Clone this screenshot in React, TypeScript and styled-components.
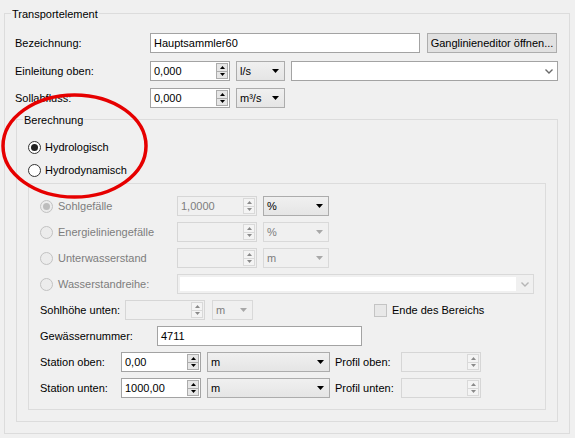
import React from "react";
import styled, { createGlobalStyle } from "styled-components";

const GlobalStyle = createGlobalStyle`
  html, body { margin: 0; padding: 0; background: #f0f0f0; }
  body {
    font-family: "Liberation Sans", Arial, sans-serif;
    font-size: 11px;
    color: #000;
  }
  * { box-sizing: border-box; }
`;

const DISABLED_TEXT = "#7d7d7d";

const Page = styled.div`
  position: relative;
  width: 575px;
  height: 438px;
  padding: 13px 0 0 4px;
  background: #f0f0f0;
  overflow: hidden;
`;

const GroupBox = styled.div<{ $w: number; $h: number; $ml?: number; $mt?: number }>`
  display: flex;
  flex-direction: column;
  width: ${(p) => p.$w}px;
  height: ${(p) => p.$h}px;
  margin: ${(p) => p.$mt ?? 0}px 0 0 ${(p) => p.$ml ?? 0}px;
  border: 1px solid #dcdcdc;
  flex: none;
`;

const GroupTitle = styled.div`
  align-self: flex-start;
  margin: -6px 0 0 6px;
  padding: 0 1px;
  line-height: 13px;
  height: 13px;
  background: #f0f0f0;
  white-space: nowrap;
`;

const Row = styled.div<{ $mt: number; $ml?: number; $h?: number }>`
  display: flex;
  align-items: center;
  height: ${(p) => p.$h ?? 20}px;
  margin: ${(p) => p.$mt}px 0 0 ${(p) => p.$ml ?? 0}px;
  flex: none;
`;

const Label = styled.div<{ $w?: number; $disabled?: boolean; $ml?: number }>`
  width: ${(p) => (p.$w ? `${p.$w}px` : "auto")};
  margin-left: ${(p) => p.$ml ?? 0}px;
  flex: none;
  white-space: nowrap;
  line-height: 13px;
  color: ${(p) => (p.$disabled ? DISABLED_TEXT : "#000")};
`;

const TextBox = styled.div<{ $w: number }>`
  width: ${(p) => p.$w}px;
  height: 20px;
  flex: none;
  border: 1px solid #a3a3a3;
  background: #fff;
  padding-left: 3px;
  line-height: 18px;
  white-space: nowrap;
`;

const PushButton = styled.div<{ $w: number; $ml?: number }>`
  width: ${(p) => p.$w}px;
  height: 20px;
  margin-left: ${(p) => p.$ml ?? 0}px;
  flex: none;
  border: 1px solid #adadad;
  background: #e1e1e1;
  display: flex;
  align-items: center;
  justify-content: center;
  white-space: nowrap;
`;

/* ---------- Spin box ---------- */

const SpinFrame = styled.div<{ $w: number; $ml?: number; $disabled?: boolean }>`
  display: flex;
  align-items: stretch;
  width: ${(p) => p.$w}px;
  height: 20px;
  margin-left: ${(p) => p.$ml ?? 0}px;
  flex: none;
  padding: 1px 1px 1px 0;
  border: 1px solid ${(p) => (p.$disabled ? "#d6d6d6" : "#a3a3a3")};
  background: ${(p) => (p.$disabled ? "#f0f0f0" : "#fff")};
`;

const SpinValue = styled.div<{ $disabled?: boolean }>`
  flex: 1;
  padding-left: 3px;
  line-height: 16px;
  white-space: nowrap;
  color: ${(p) => (p.$disabled ? DISABLED_TEXT : "#000")};
`;

const SpinButtons = styled.div<{ $disabled?: boolean }>`
  width: 12px;
  display: flex;
  flex-direction: column;
  border: 1px solid ${(p) => (p.$disabled ? "#d9d9d9" : "#acacac")};
  background: ${(p) => (p.$disabled ? "#f4f4f4" : "#e6e6e6")};
`;

const SpinHalf = styled.div<{ $top?: boolean; $disabled?: boolean }>`
  flex: 1;
  display: flex;
  align-items: center;
  justify-content: center;
  border-bottom: ${(p) => (p.$top ? `1px solid ${p.$disabled ? "#d9d9d9" : "#acacac"}` : "none")};
`;

const Tri: React.FC<{ up?: boolean; color: string; w?: number; h?: number }> = ({ up, color, w = 5, h = 3 }) => (
  <svg width={w} height={h} viewBox={`0 0 ${w} ${h}`} style={{ display: "block" }}>
    {up ? (
      <polygon points={`0,${h} ${w / 2},0 ${w},${h}`} fill={color} />
    ) : (
      <polygon points={`0,0 ${w},0 ${w / 2},${h}`} fill={color} />
    )}
  </svg>
);

const SpinBox: React.FC<{ w?: number; ml?: number; value?: string; disabled?: boolean }> = ({
  w = 80,
  ml,
  value = "",
  disabled,
}) => {
  const c = disabled ? "#8a8a8a" : "#000";
  return (
    <SpinFrame $w={w} $ml={ml} $disabled={disabled}>
      <SpinValue $disabled={disabled}>{value}</SpinValue>
      <SpinButtons $disabled={disabled}>
        <SpinHalf $top $disabled={disabled}>
          <Tri up color={c} />
        </SpinHalf>
        <SpinHalf $disabled={disabled}>
          <Tri color={c} />
        </SpinHalf>
      </SpinButtons>
    </SpinFrame>
  );
};

/* ---------- Combo boxes ---------- */

const DropList = styled.div<{ $w: number; $ml?: number; $disabled?: boolean }>`
  display: flex;
  align-items: center;
  justify-content: space-between;
  width: ${(p) => p.$w}px;
  height: 20px;
  margin-left: ${(p) => p.$ml ?? 0}px;
  flex: none;
  padding: 0 5px 0 3px;
  border: 1px solid ${(p) => (p.$disabled ? "#d9d9d9" : "#acacac")};
  background: ${(p) => (p.$disabled ? "#f0f0f0" : "linear-gradient(#f0f0f0, #e5e5e5)")};
  color: ${(p) => (p.$disabled ? DISABLED_TEXT : "#000")};
  white-space: nowrap;
`;

const ComboBox: React.FC<{ w: number; ml?: number; value: string; disabled?: boolean }> = ({
  w,
  ml,
  value,
  disabled,
}) => (
  <DropList $w={w} $ml={ml} $disabled={disabled}>
    <span>{value}</span>
    <Tri color={disabled ? "#a8a8a8" : "#000"} w={7} h={4} />
  </DropList>
);

const EditFrame = styled.div<{ $w: number; $ml?: number; $disabled?: boolean }>`
  display: flex;
  align-items: stretch;
  width: ${(p) => p.$w}px;
  height: 20px;
  margin-left: ${(p) => p.$ml ?? 0}px;
  flex: none;
  border: 1px solid ${(p) => (p.$disabled ? "#d9d9d9" : "#a3a3a3")};
  background: ${(p) => (p.$disabled ? "#f0f0f0" : "#fff")};
  padding: ${(p) => (p.$disabled ? "2px 0 2px 2px" : "0")};
`;

const EditField = styled.div`
  flex: 1;
  background: #fff;
`;

const ChevronCell = styled.div`
  width: 17px;
  display: flex;
  align-items: center;
  justify-content: center;
`;

const Chevron: React.FC<{ color: string }> = ({ color }) => (
  <svg width="8" height="5" viewBox="0 0 8 5" style={{ display: "block" }}>
    <polyline points="0.5,0.5 4,4 7.5,0.5" fill="none" stroke={color} strokeWidth="1.4" />
  </svg>
);

const EditCombo: React.FC<{ w: number; ml?: number; disabled?: boolean }> = ({ w, ml, disabled }) => (
  <EditFrame $w={w} $ml={ml} $disabled={disabled}>
    <EditField />
    <ChevronCell>
      <Chevron color={disabled ? "#b5b5b5" : "#6a6a6a"} />
    </ChevronCell>
  </EditFrame>
);

/* ---------- Radio / Checkbox ---------- */

const RadioWrap = styled.div<{ $w?: number; $ml?: number }>`
  display: flex;
  align-items: center;
  width: ${(p) => (p.$w ? `${p.$w}px` : "auto")};
  margin-left: ${(p) => p.$ml ?? 0}px;
  flex: none;
`;

const RadioCircle = styled.span<{ $checked?: boolean; $disabled?: boolean }>`
  width: 13px;
  height: 13px;
  flex: none;
  border-radius: 50%;
  border: 1px solid ${(p) => (p.$disabled ? "#c2c2c2" : "#333")};
  background: ${(p) => (p.$disabled ? "#ececec" : "#fff")};
  display: flex;
  align-items: center;
  justify-content: center;
  &::after {
    content: "";
    display: ${(p) => (p.$checked ? "block" : "none")};
    width: 7px;
    height: 7px;
    border-radius: 50%;
    background: ${(p) => (p.$disabled ? "#bdbdbd" : "#222")};
  }
`;

const RadioText = styled.span<{ $disabled?: boolean; $gap: number }>`
  margin-left: ${(p) => p.$gap}px;
  line-height: 13px;
  white-space: nowrap;
  color: ${(p) => (p.$disabled ? DISABLED_TEXT : "#000")};
`;

const Radio: React.FC<{
  label: string;
  checked?: boolean;
  disabled?: boolean;
  w?: number;
  ml?: number;
  gap?: number;
}> = ({ label, checked, disabled, w, ml, gap = 5 }) => (
  <RadioWrap $w={w} $ml={ml}>
    <RadioCircle $checked={checked} $disabled={disabled} />
    <RadioText $disabled={disabled} $gap={gap}>
      {label}
    </RadioText>
  </RadioWrap>
);

const CheckBoxBox = styled.span`
  width: 13px;
  height: 13px;
  flex: none;
  border: 1px solid #c4c4c4;
  background: #e8e8e8;
`;

const CheckWrap = styled.div<{ $ml: number }>`
  display: flex;
  align-items: center;
  margin-left: ${(p) => p.$ml}px;
  flex: none;
`;

/* ---------- Annotation ---------- */

const Annotation = styled.svg`
  position: absolute;
  left: 0;
  top: 0;
  pointer-events: none;
`;

export default function App() {
  return (
    <>
      <GlobalStyle />
      <Page>
        <GroupBox $w={566} $h={421}>
          <GroupTitle>Transportelement</GroupTitle>

          <Row $mt={12} $ml={10}>
            <Label $w={135}>Bezeichnung:</Label>
            <TextBox $w={270}>Hauptsammler60</TextBox>
            <PushButton $w={130} $ml={7}>
              Ganglinieneditor öffnen...
            </PushButton>
          </Row>

          <Row $mt={8} $ml={10}>
            <Label $w={135}>Einleitung oben:</Label>
            <SpinBox value="0,000" />
            <ComboBox w={49} ml={6} value="l/s" />
            <EditCombo w={267} ml={6} />
          </Row>

          <Row $mt={7} $ml={10}>
            <Label $w={135}>Sollabfluss:</Label>
            <SpinBox value="0,000" />
            <ComboBox w={49} ml={6} value="m³/s" />
          </Row>

          <GroupBox $w={542} $h={303} $ml={11} $mt={11}>
            <GroupTitle>Berechnung</GroupTitle>

            <Row $mt={14} $ml={11} $h={13}>
              <Radio label="Hydrologisch" checked gap={4} />
            </Row>
            <Row $mt={10} $ml={11} $h={13}>
              <Radio label="Hydrodynamisch" gap={4} />
            </Row>

            <GroupBox $w={518} $h={227} $ml={11} $mt={6}>
              <Row $mt={12} $ml={11}>
                <Radio label="Sohlgefälle" checked disabled w={137} />
                <SpinBox value="1,0000" disabled />
                <ComboBox w={66} ml={6} value="%" />
              </Row>
              <Row $mt={6} $ml={11}>
                <Radio label="Energieliniengefälle" disabled w={137} />
                <SpinBox disabled />
                <ComboBox w={66} ml={6} value="%" disabled />
              </Row>
              <Row $mt={6} $ml={11}>
                <Radio label="Unterwasserstand" disabled w={137} />
                <SpinBox disabled />
                <ComboBox w={66} ml={6} value="m" disabled />
              </Row>
              <Row $mt={6} $ml={11}>
                <Radio label="Wasserstandreihe:" disabled w={137} />
                <EditCombo w={357} disabled />
              </Row>
              <Row $mt={6} $ml={11}>
                <Label $w={85}>Sohlhöhe unten:</Label>
                <SpinBox disabled />
                <ComboBox w={41} ml={7} value="m" disabled />
                <CheckWrap $ml={121}>
                  <CheckBoxBox />
                  <Label $ml={5}>Ende des Bereichs</Label>
                </CheckWrap>
              </Row>
              <Row $mt={6} $ml={11}>
                <Label $w={117}>Gewässernummer:</Label>
                <TextBox $w={205}>4711</TextBox>
              </Row>
              <Row $mt={6} $ml={11}>
                <Label $w={81}>Station oben:</Label>
                <SpinBox value="0,00" />
                <ComboBox w={123} ml={6} value="m" />
                <Label $w={66} $ml={5}>
                  Profil oben:
                </Label>
                <SpinBox disabled />
              </Row>
              <Row $mt={6} $ml={11}>
                <Label $w={81}>Station unten:</Label>
                <SpinBox value="1000,00" />
                <ComboBox w={123} ml={6} value="m" />
                <Label $w={66} $ml={5}>
                  Profil unten:
                </Label>
                <SpinBox disabled />
              </Row>
            </GroupBox>
          </GroupBox>
        </GroupBox>

        <Annotation width="575" height="438" viewBox="0 0 575 438">
          <ellipse cx="74.5" cy="146" rx="71.5" ry="51" fill="none" stroke="#e60000" strokeWidth="3.5" />
        </Annotation>
      </Page>
    </>
  );
}
